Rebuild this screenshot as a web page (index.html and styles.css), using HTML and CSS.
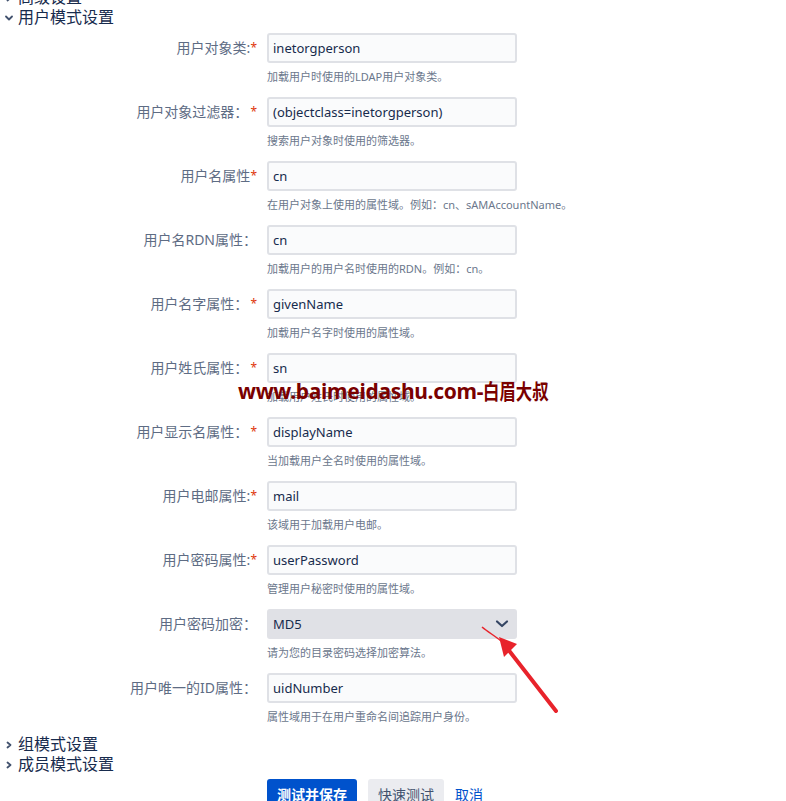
FILE: index.html
```html
<!DOCTYPE html>
<html lang="zh-CN">
<head>
  <meta charset="UTF-8" />
  <title>用户模式设置</title>
  <link rel="stylesheet" href="styles.css">
</head>
<body>
  <div class="page">
    <div class="section">
      <svg class="chev" viewBox="0 0 8 8"><path d="M2.5 1.5 L5.5 4 L2.5 6.5" /></svg>
      <span>高级设置</span>
    </div>
    <div class="section">
      <svg class="chev" viewBox="0 0 8 8"><path d="M1 2.5 L4 5.5 L7 2.5" /></svg>
      <span>用户模式设置</span>
    </div>

    <form class="form">
      <div class="field-group">
        <label>用户对象类:<span class="req">*</span></label>
        <input class="text" type="text" value="inetorgperson">
        <div class="description">加载用户时使用的LDAP用户对象类。</div>
      </div>
      <div class="field-group">
        <label>用户对象过滤器：<span class="req gap">*</span></label>
        <input class="text" type="text" value="(objectclass=inetorgperson)">
        <div class="description">搜索用户对象时使用的筛选器。</div>
      </div>
      <div class="field-group">
        <label>用户名属性<span class="req">*</span></label>
        <input class="text" type="text" value="cn">
        <div class="description">在用户对象上使用的属性域。例如：cn、sAMAccountName。</div>
      </div>
      <div class="field-group">
        <label>用户名RDN属性：</label>
        <input class="text" type="text" value="cn">
        <div class="description">加载用户的用户名时使用的RDN。例如：cn。</div>
      </div>
      <div class="field-group">
        <label>用户名字属性：<span class="req gap">*</span></label>
        <input class="text" type="text" value="givenName">
        <div class="description">加载用户名字时使用的属性域。</div>
      </div>
      <div class="field-group">
        <label>用户姓氏属性：<span class="req gap">*</span></label>
        <input class="text" type="text" value="sn">
        <div class="description">加载用户姓氏时使用的属性域。</div>
      </div>
      <div class="field-group">
        <label>用户显示名属性：<span class="req gap">*</span></label>
        <input class="text" type="text" value="displayName">
        <div class="description">当加载用户全名时使用的属性域。</div>
      </div>
      <div class="field-group">
        <label>用户电邮属性:<span class="req">*</span></label>
        <input class="text" type="text" value="mail">
        <div class="description">该域用于加载用户电邮。</div>
      </div>
      <div class="field-group">
        <label>用户密码属性:<span class="req">*</span></label>
        <input class="text" type="text" value="userPassword">
        <div class="description">管理用户秘密时使用的属性域。</div>
      </div>
      <div class="field-group">
        <label>用户密码加密：</label>
        <div class="select">
          <span>MD5</span>
          <svg class="select-arrow" viewBox="0 0 14 10"><path d="M2 2.5 L7 7 L12 2.5" /></svg>
        </div>
        <div class="description">请为您的目录密码选择加密算法。</div>
      </div>
      <div class="field-group">
        <label>用户唯一的ID属性：</label>
        <input class="text" type="text" value="uidNumber">
        <div class="description">属性域用于在用户重命名间追踪用户身份。</div>
      </div>
    </form>

    <div class="section">
      <svg class="chev" viewBox="0 0 8 8"><path d="M2.5 1.5 L5.5 4 L2.5 6.5" /></svg>
      <span>组模式设置</span>
    </div>
    <div class="section">
      <svg class="chev" viewBox="0 0 8 8"><path d="M2.5 1.5 L5.5 4 L2.5 6.5" /></svg>
      <span>成员模式设置</span>
    </div>

    <div class="buttons">
      <button class="button primary" type="button">测试并保存</button>
      <button class="button" type="button">快速测试</button>
      <a class="cancel" href="#">取消</a>
    </div>
  </div>

  <div class="watermark">www.baimeidashu.com-<span class="wm-cjk">白眉大叔</span></div>

  <svg class="annotation" width="786" height="801" viewBox="0 0 786 801">
    <path class="thin" d="M482 627 C488 632 495 636 501 641" />
    <path class="shaft" d="M556 711 L507 648" />
    <polygon class="head" points="499,637 517,644 504,657" />
  </svg>
</body>
</html>
```

FILE: styles.css
```css
body {
  margin: 0;
  font-family: "Noto Sans", "Noto Sans CJK SC", sans-serif;
  font-size: 14px;
  color: #172b4d;
  background: #fff;
  overflow: hidden;
}

.page {
  margin-top: -13px;
}

.section {
  display: flex;
  align-items: center;
  height: 20px;
  font-size: 16px;
  line-height: 20px;
  color: #172b4d;
}

.chev {
  width: 8px;
  height: 8px;
  margin: 1px 5px 0 5px;
}

.chev path {
  fill: none;
  stroke: #42526e;
  stroke-width: 1.8;
  stroke-linecap: round;
  stroke-linejoin: round;
}

.form {
  margin: 0;
  padding: 6px 0 9px;
}

.field-group {
  display: grid;
  grid-template-columns: 257px 250px;
  column-gap: 10px;
}

.field-group + .field-group {
  margin-top: 12px;
}

.field-group label {
  grid-column: 1;
  grid-row: 1;
  align-self: center;
  text-align: right;
  color: #5e6c84;
  white-space: nowrap;
  line-height: 20px;
}

.req {
  color: #de350b;
  font-size: 12px;
  vertical-align: top;
}

.req.gap {
  margin-left: 2px;
}

.text,
.select {
  grid-column: 2;
  grid-row: 1;
  box-sizing: border-box;
  height: 30px;
  border: 2px solid #dfe1e6;
  border-radius: 3px;
  background: #fafbfc;
  font-family: inherit;
  font-size: 13px;
  color: #172b4d;
  padding: 0 4px;
  margin: 0;
  outline: none;
}

.select {
  display: flex;
  align-items: center;
  justify-content: space-between;
  background: #e0e1e6;
  border-color: #e0e1e6;
  padding: 0 6px 0 4px;
}

.select-arrow {
  width: 14px;
  height: 10px;
}

.select-arrow path {
  fill: none;
  stroke: #344563;
  stroke-width: 2.2;
  stroke-linecap: round;
  stroke-linejoin: round;
}

.description {
  grid-column: 2;
  grid-row: 2;
  margin-top: 6px;
  font-size: 11px;
  line-height: 16px;
  color: #6b778c;
  white-space: nowrap;
}

.buttons {
  display: flex;
  align-items: center;
  gap: 11px;
  padding: 5px 0 0 267px;
}

.button {
  height: 30px;
  padding: 0 10px;
  border: none;
  border-radius: 3px;
  font-family: inherit;
  font-size: 14px;
  background: #ebecf0;
  color: #42526e;
  cursor: pointer;
}

.button.primary {
  background: #0052cc;
  color: #fff;
  font-weight: bold;
}

.cancel {
  color: #0052cc;
  text-decoration: none;
}

/* watermark and the arrow lie over the form */
.watermark {
  position: absolute;
  left: 238px;
  top: 378px;
  font-size: 21px;
  font-weight: bold;
  line-height: 26px;
  color: #7a0000;
  white-space: nowrap;
  letter-spacing: -0.3px;
}

.wm-cjk {
  display: inline-block;
  font-size: 21px;
  letter-spacing: 0;
  transform: scaleX(0.78);
  transform-origin: left center;
}

.annotation {
  position: absolute;
  left: 0;
  top: 0;
  pointer-events: none;
}

.annotation .thin {
  fill: none;
  stroke: #e8232b;
  stroke-width: 1.5;
}

.annotation .shaft {
  stroke: #e8232b;
  stroke-width: 4;
  stroke-linecap: round;
}

.annotation .head {
  fill: #e8232b;
}
```
